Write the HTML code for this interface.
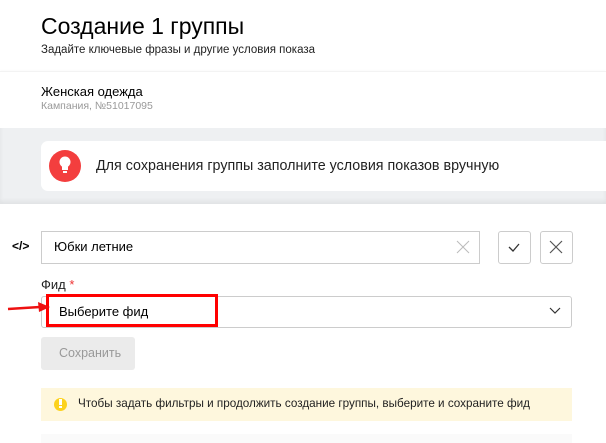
<!DOCTYPE html><html><head><style>
body{margin:0;width:606px;height:443px;overflow:hidden;background:#fff;font-family:"Liberation Sans",sans-serif;position:relative;color:#000}
div{position:absolute;box-sizing:border-box}
</style></head><body>
<div style="left:41px;top:13px;font-size:23px;">Создание 1 группы</div>
<div style="left:41px;top:44px;font-size:11.5px;color:#222">Задайте ключевые фразы и другие условия показа</div>
<div style="left:0;top:71px;width:606px;height:57px;background:#fff;border-top:1px solid #f3f3f3;box-shadow:0 2px 4px rgba(0,0,0,.12)"></div>
<div style="left:41px;top:84px;font-size:13px;">Женская одежда</div>
<div style="left:41px;top:100px;font-size:10.5px;color:#999">Кампания, №51017095</div>
<div style="left:0;top:128px;width:606px;height:76px;background:#eef0f2;box-shadow:inset 0 -3px 4px rgba(0,0,0,.06)"></div>
<div style="left:41px;top:141px;width:580px;height:50px;background:#fff;border-radius:7px"></div>
<div style="left:49px;top:150px;width:32px;height:32px;border-radius:16px;background:#f33e3e"></div>
<svg style="position:absolute;left:55px;top:154px" width="20" height="24" viewBox="0 0 20 24"><circle cx="10" cy="8" r="5.5" fill="#fff"/><rect x="7" y="12" width="6" height="4" fill="#fff"/><rect x="8" y="17" width="4" height="2" fill="#fff"/></svg>
<div style="left:96px;top:158px;font-size:14.3px;color:#222">Для сохранения группы заполните условия показов вручную</div>
<div style="left:12px;top:239px;font-size:12px;font-weight:bold">&lt;/&gt;</div>
<div style="left:41px;top:231px;width:439px;height:33px;border:1px solid #ccc"></div>
<div style="left:54px;top:239px;font-size:13px;">Юбки летние</div>
<svg style="position:absolute;left:456px;top:240px" width="14" height="14"><path d="M1 1L13 13M13 1L1 13" stroke="#bbb" stroke-width="1"/></svg>
<div style="left:498px;top:231px;width:33px;height:33px;border:1px solid #ccc;border-radius:3px"></div>
<svg style="position:absolute;left:507px;top:241px" width="14" height="12"><path d="M2 6L6 10L12 3" stroke="#333" stroke-width="1.3" fill="none"/></svg>
<div style="left:540px;top:231px;width:33px;height:33px;border:1px solid #ccc;border-radius:3px"></div>
<svg style="position:absolute;left:549px;top:240px" width="14" height="14"><path d="M1 1L13 13M13 1L1 13" stroke="#555" stroke-width="1.2"/></svg>
<div style="left:41px;top:277px;font-size:13px;color:#222">Фид <span style="color:#e33">*</span></div>
<div style="left:41px;top:296px;width:531px;height:32px;border:1px solid #ccc;border-radius:3px"></div>
<div style="left:46px;top:294px;width:172px;height:33px;border:3px solid #f00"></div>
<div style="left:59px;top:304px;font-size:13px;">Выберите фид</div>
<svg style="position:absolute;left:549px;top:306px" width="12" height="10"><path d="M1 2L6 7L11 2" stroke="#333" stroke-width="1.2" fill="none"/></svg>
<svg style="position:absolute;left:6px;top:301px" width="44" height="12"><path d="M2 8L34 6" stroke="#e11" stroke-width="2.5"/><path d="M32 1L44 6L33 11Z" fill="#e11"/></svg>
<div style="left:41px;top:356px;width:94px;height:0"></div>
<div style="left:41px;top:337px;width:94px;height:33px;background:#ebebeb;border-radius:3px"></div>
<div style="left:59px;top:346px;font-size:12.5px;color:#999">Сохранить</div>
<div style="left:41px;top:388px;width:531px;height:33px;background:#fef7dd"></div>
<div style="left:54px;top:398px;width:13px;height:13px;border-radius:50%;background:#fcd21d"></div>
<div style="left:59px;top:399px;width:3px;height:6px;background:#fff"></div>
<div style="left:59px;top:406px;width:3px;height:2px;background:#fff"></div>
<div style="left:78px;top:397px;font-size:11.7px;color:#222">Чтобы задать фильтры и продолжить создание группы, выберите и сохраните фид</div>
<div style="left:41px;top:434px;width:531px;height:9px;background:#fafafa"></div>
</body></html>
